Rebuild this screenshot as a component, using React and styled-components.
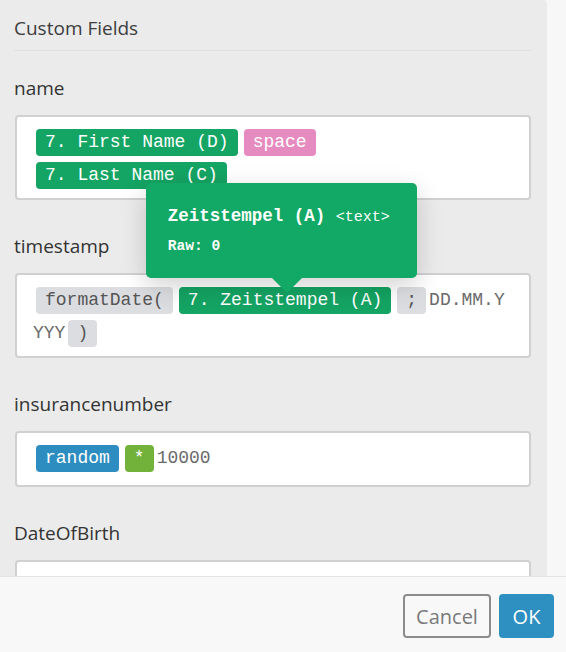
import React from "react";
import styled, { createGlobalStyle } from "styled-components";

const GlobalStyle = createGlobalStyle`
  html, body {
    margin: 0;
    padding: 0;
  }
  body {
    background: #f7f7f7;
    font-family: "Open Sans", "Noto Sans", sans-serif;
  }
`;

const chipColors = {
  field: { bg: "#14a463", fg: "#fff" },
  space: { bg: "#e68bbf", fg: "#fff" },
  func: { bg: "#dcdde1", fg: "#555" },
  random: { bg: "#2e8dc0", fg: "#fff" },
  op: { bg: "#72b13a", fg: "#fff" },
};

const Dialog = styled.div`
  width: 566px;
  height: 652px;
  display: flex;
  flex-direction: column;
  overflow: hidden;
  background: #f7f7f7;
`;

const Body = styled.div`
  flex: 1;
  min-height: 0;
  display: flex;
`;

const Panel = styled.div`
  width: 547px;
  box-sizing: border-box;
  background: #ebebeb;
  border-top-right-radius: 4px;
  padding: 0 16px 0 14px;
  overflow: hidden;
`;

const Title = styled.h2`
  margin: 0;
  padding: 15px 0 9px;
  font-size: 19px;
  font-weight: 400;
  line-height: 26px;
  color: #3d3d3d;
  border-bottom: 1px solid #dfdfe6;
`;

const Fields = styled.div`
  display: flex;
  flex-direction: column;
  gap: 33px;
  padding-top: 24px;
`;

const Field = styled.div``;

const Label = styled.div`
  font-size: 19px;
  line-height: 26px;
  color: #333;
  margin-bottom: 14px;
`;

const Editor = styled.div`
  margin-left: 1px;
  box-sizing: border-box;
  min-height: 56px;
  background: #fff;
  border: 2px solid #d0d0d0;
  border-radius: 4px;
  padding: 9px 18px 6px 16px;
  font-family: "Liberation Mono", "Courier New", monospace;
  font-size: 18px;
  line-height: 33px;
  color: #6a6a6a;
  word-break: break-all;
`;

const Chip = styled.span`
  position: relative;
  display: inline-block;
  vertical-align: top;
  height: 27px;
  line-height: 27px;
  margin: 3px 3px 0;
  padding: 0 9px;
  border-radius: 4px;
  white-space: pre;
  word-break: normal;
  background: ${(p) => chipColors[p.$kind].bg};
  color: ${(p) => chipColors[p.$kind].fg};
`;

const Tooltip = styled.div`
  position: absolute;
  left: -33px;
  bottom: calc(100% + 9px);
  width: 271px;
  height: 95px;
  box-sizing: border-box;
  padding: 23px 22px 0;
  background: #12a865;
  border-radius: 5px;
  box-shadow: 0 8px 26px rgba(0, 0, 0, 0.18);
  z-index: 5;
  color: #fff;
  white-space: nowrap;

  &::after {
    content: "";
    position: absolute;
    top: 100%;
    left: 126px;
    border-left: 15px solid transparent;
    border-right: 15px solid transparent;
    border-top: 15px solid #12a865;
  }
`;

const TipTitle = styled.div`
  line-height: 20px;
  font-size: 17.5px;
  font-weight: 700;
`;

const TipType = styled.span`
  font-size: 15px;
  font-weight: 400;
`;

const TipRaw = styled.div`
  margin-top: 8px;
  line-height: 20px;
  font-size: 14.6px;
  font-weight: 700;
`;

const Footer = styled.div`
  height: 76px;
  box-sizing: border-box;
  border-top: 1px solid #e4e4e4;
  background: #f8f8f8;
  display: flex;
  justify-content: flex-end;
  align-items: flex-start;
  gap: 8px;
  padding: 17px 12px 0;
`;

const Button = styled.button`
  height: 44px;
  box-sizing: border-box;
  border-radius: 4px;
  font-family: "Open Sans", "Noto Sans", sans-serif;
  font-size: 20px;
  padding: 0;
  width: ${(p) => (p.$primary ? "55px" : "88px")};
  background: ${(p) => (p.$primary ? "#2e8fc1" : "transparent")};
  color: ${(p) => (p.$primary ? "#fff" : "#7a7a7a")};
  border: ${(p) => (p.$primary ? "none" : "2px solid #8c8c8c")};
  cursor: pointer;
`;

export default function App() {
  return (
    <Dialog>
      <GlobalStyle />
      <Body>
        <Panel>
          <Title>Custom Fields</Title>
          <Fields>
            <Field>
              <Label>name</Label>
              <Editor>
                <Chip $kind="field">7. First Name (D)</Chip>
                <Chip $kind="space">space</Chip>
                <Chip $kind="field">7. Last Name (C)</Chip>
              </Editor>
            </Field>
            <Field>
              <Label>timestamp</Label>
              <Editor>
                <Chip $kind="func">formatDate(</Chip>
                <Chip $kind="field">
                  7. Zeitstempel (A)
                  <Tooltip>
                    <TipTitle>
                      Zeitstempel (A) <TipType>&lt;text&gt;</TipType>
                    </TipTitle>
                    <TipRaw>Raw: 0</TipRaw>
                  </Tooltip>
                </Chip>
                <Chip $kind="func">;</Chip>
                DD.MM.YYYY
                <Chip $kind="func">)</Chip>
              </Editor>
            </Field>
            <Field>
              <Label>insurancenumber</Label>
              <Editor>
                <Chip $kind="random">random</Chip>
                <Chip $kind="op">*</Chip>
                10000
              </Editor>
            </Field>
            <Field>
              <Label>DateOfBirth</Label>
              <Editor />
            </Field>
          </Fields>
        </Panel>
      </Body>
      <Footer>
        <Button>Cancel</Button>
        <Button $primary>OK</Button>
      </Footer>
    </Dialog>
  );
}
